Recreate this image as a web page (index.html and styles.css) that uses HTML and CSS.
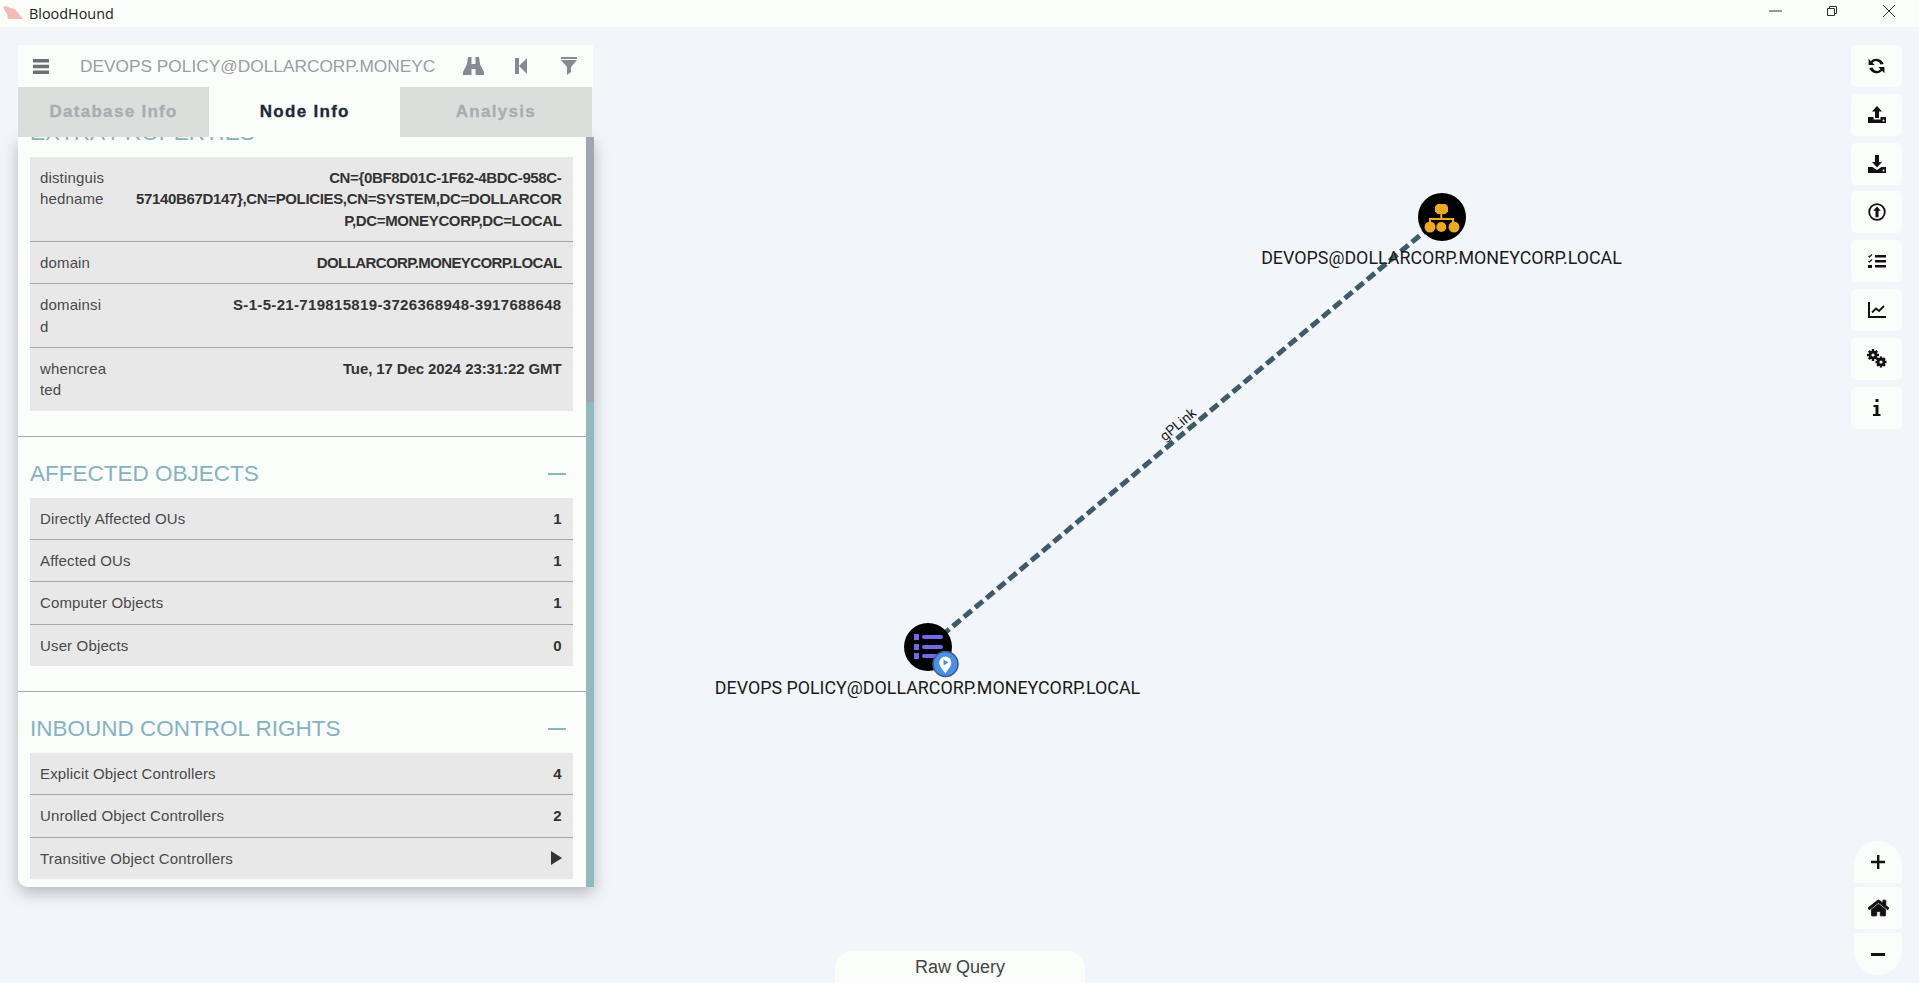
FILE: index.html
```html
<!DOCTYPE html>
<html lang="en">
<head>
  <meta charset="UTF-8">
  <title>BloodHound</title>
  <link rel="stylesheet" href="styles.css">
</head>
<body>
<!-- graph canvas sits under everything else -->
<svg class="graph" width="1919" height="983" viewBox="0 0 1919 983">
  <line class="edge" x1="1442" y1="217" x2="928" y2="647"/>
  <text class="edge-label" transform="translate(1181 428) rotate(-40)">gPLink</text>

  <circle class="node" cx="1442" cy="217" r="24"/>
  <g class="ou-icon">
    <path d="M1437.500 204h8l2.500 2.500v5l-2.500 2.500h-8l-2.500-2.500v-5z"/>
    <rect x="1440.300" y="213" width="2" height="7"/>
    <rect x="1429" y="218" width="25" height="2"/>
    <rect x="1429" y="218" width="2" height="6"/>
    <rect x="1452" y="218" width="2" height="6"/>
    <circle cx="1430" cy="227" r="5.500"/>
    <circle cx="1441.300" cy="227" r="5"/>
    <circle cx="1454" cy="227" r="5.500"/>
  </g>
  <text class="node-label" x="1441.500" y="264">DEVOPS@DOLLARCORP.MONEYCORP.LOCAL</text>

  <circle class="node" cx="928" cy="647" r="24"/>
  <g class="gpo-icon">
    <rect x="914" y="634" width="5" height="6"/>
    <rect x="914" y="644" width="5" height="6"/>
    <rect x="914" y="653" width="5" height="6"/>
    <rect x="922" y="635" width="21" height="4" rx="2"/>
    <rect x="922" y="645" width="21" height="4" rx="2"/>
    <rect x="922" y="654" width="21" height="4" rx="2"/>
  </g>
  <circle class="badge" cx="945.500" cy="664" r="12.500"/>
  <path class="pin" d="M945.300 673.500c-1.500-3-6-6.500-6-11a6 6 0 0 1 12 0c0 4.500-4.500 8-6 11z"/>
  <path class="pin-dot" d="M943.500 659.500l5 3-5 3z"/>
  <text class="node-label" x="927.500" y="694">DEVOPS POLICY@DOLLARCORP.MONEYCORP.LOCAL</text>
</svg>

<div class="titlebar">
  <svg class="app-logo" width="20" height="14" viewBox="0 0 20 14"><path d="M0 1l4-1 3 2 5 1 4 5 4 5H5L4 8 2 5z"/></svg>
  <span class="app-name">BloodHound</span>
  <div class="window-controls">
    <svg width="13" height="12" viewBox="0 0 13 12"><path d="M0 6h13"/></svg>
    <svg width="12" height="12" viewBox="0 0 12 12"><path d="M1.500 3.500h7v7h-7zM3.500 3.500v-2h7v7h-2"/></svg>
    <svg width="14" height="14" viewBox="0 0 14 14"><path d="M1 1l12 12M13 1L1 13"/></svg>
  </div>
</div>

<div class="panel">
  <div class="search-bar">
    <svg class="menu-icon" width="16" height="15" viewBox="0 0 16 15"><path d="M0 0h16v3.500H0zM0 5.700h16v3.500H0zM0 11.500h16V15H0z"/></svg>
    <div class="search-text">DEVOPS POLICY@DOLLARCORP.MONEYCORP.LOCAL</div>
    <svg class="search-icon binoculars" width="21" height="18" viewBox="0 0 21 18"><path d="M5 0h3.500v7h4V0H16l1 7 4 8v3h-8.500v-6h-4v6H0v-3l4-8z"/></svg>
    <svg class="search-icon back" width="12" height="16" viewBox="0 0 12 16"><path d="M0 0h4v16H0zM4 8l8-8v16z"/></svg>
    <svg class="search-icon funnel" width="16" height="18" viewBox="0 0 16 18"><path d="M0 0h16v2H0zM0 3h16L10 10v5l-4 3v-8z"/></svg>
  </div>

  <div class="tabs">
    <div class="tab">Database Info</div>
    <div class="tab active">Node Info</div>
    <div class="tab">Analysis</div>
  </div>

  <div class="panel-body">
    <div class="content">
      <section class="section first">
        <div class="section-head"><h4>EXTRA PROPERTIES</h4><span class="collapse"></span></div>
        <div class="row prop">
          <div class="key">distinguishedname</div>
          <div class="val val-dn">CN={0BF8D01C-1F62-4BDC-958C-57140B67D147},CN=POLICIES,CN=SYSTEM,DC=DOLLARCORP,DC=MONEYCORP,DC=LOCAL</div>
        </div>
        <div class="row prop">
          <div class="key">domain</div>
          <div class="val val-caps">DOLLARCORP.MONEYCORP.LOCAL</div>
        </div>
        <div class="row prop">
          <div class="key">domainsid</div>
          <div class="val val-sid">S-1-5-21-719815819-3726368948-3917688648</div>
        </div>
        <div class="row prop">
          <div class="key">whencreated</div>
          <div class="val">Tue, 17 Dec 2024 23:31:22 GMT</div>
        </div>
      </section>

      <section class="section">
        <div class="section-head"><h4>AFFECTED OBJECTS</h4><span class="collapse"></span></div>
        <div class="row"><div class="name">Directly Affected OUs</div><div class="val">1</div></div>
        <div class="row"><div class="name">Affected OUs</div><div class="val">1</div></div>
        <div class="row"><div class="name">Computer Objects</div><div class="val">1</div></div>
        <div class="row"><div class="name">User Objects</div><div class="val">0</div></div>
      </section>

      <section class="section">
        <div class="section-head"><h4>INBOUND CONTROL RIGHTS</h4><span class="collapse"></span></div>
        <div class="row"><div class="name">Explicit Object Controllers</div><div class="val">4</div></div>
        <div class="row"><div class="name">Unrolled Object Controllers</div><div class="val">2</div></div>
        <div class="row"><div class="name">Transitive Object Controllers</div><span class="play"></span></div>
      </section>
    </div>
    <div class="scrollbar"><div class="thumb"></div></div>
  </div>
</div>

<div class="toolbar">
  <div class="tool"><svg width="19" height="18" viewBox="0 0 18 16"><path d="M15.800 6.200A7.200 7.200 0 0 0 3.700 3.400L1.500 1.200V7h5.800L5.200 5A4.400 4.400 0 0 1 12.800 6.500zM2.200 9.800a7.200 7.200 0 0 0 12.100 2.800l2.200 2.200V9h-5.800l2.100 2A4.400 4.400 0 0 1 5.200 9.500z"/></svg></div>
  <div class="tool"><svg width="18" height="17" viewBox="0 0 18 17"><path d="M9 0l5 5.500h-3V12H7V5.500H4zM0 11h5.500v2.500h7V11H18v6H0z"/><circle class="hole" cx="15.500" cy="14.500" r="1"/></svg></div>
  <div class="tool"><svg width="18" height="18" viewBox="0 0 18 18"><path d="M7 0h4v7h3l-5 5.500L4 7h3zM0 12h4.500L9 15l4.500-3H18v6H0z"/><circle class="hole" cx="15.500" cy="15.500" r="1"/></svg></div>
  <div class="tool"><svg width="18" height="18" viewBox="0 0 18 18"><circle class="ring" cx="9" cy="9" r="7.800"/><path d="M9 3.500l3.800 4.300h-2.300v6.500h-3V7.800H5.200z"/></svg></div>
  <div class="tool"><svg width="18" height="14" viewBox="0 0 18 14"><path d="M7 1h11v2.400H7zM7 6h11v2.400H7zM7 11h11v2.400H7zM0 11h4v3H0z"/><path class="tick" d="M.5 2l1 1 2.500-2.500M.5 7l1 1 2.500-2.500"/></svg></div>
  <div class="tool"><svg width="18" height="16" viewBox="0 0 18 16"><path d="M0 0h2v14h16v2H0z"/><path class="tick wide" d="M4 10.500l4-4 3 2.500 5-5"/></svg></div>
  <div class="tool"><svg width="20" height="19" viewBox="0 0 20 19"><g class="gear"><path class="spoke" d="M6 0v12M0 6h12M1.800 1.800l8.400 8.400M10.200 1.800l-8.400 8.400"/><circle cx="6" cy="6" r="2.900"/></g><g class="gear"><path class="spoke" d="M14 7.500v11M8.500 13h11M10.100 9.100l7.800 7.800M17.900 9.100l-7.800 7.800"/><circle cx="14" cy="13" r="2.900"/></g></svg></div>
  <div class="tool"><svg width="10" height="17" viewBox="0 0 10 17"><path d="M3.500 0h3v3h-3zM1.500 6h5v9h2v2H1v-2h2.500V8h-2z"/></svg></div>
</div>

<div class="zoom-controls">
  <div class="zoom-btn zoom-in"><svg width="14" height="14" viewBox="0 0 14 14"><path d="M6 0h2.400v5.800H14v2.400H8.400V14H6V8.200H0V5.800h6z"/></svg></div>
  <div class="zoom-btn"><svg class="home" width="21" height="18" viewBox="0 0 576 512" preserveAspectRatio="none"><path d="M280.370 148.260L96 300.110V464a16 16 0 0 0 16 16l112.060-.29a16 16 0 0 0 15.920-16V368a16 16 0 0 1 16-16h64a16 16 0 0 1 16 16v95.640a16 16 0 0 0 16 16.050L464 480a16 16 0 0 0 16-16V300L295.670 148.260a12.190 12.190 0 0 0-15.300 0zM571.600 251.470L488 182.560V44.050a12 12 0 0 0-12-12h-56a12 12 0 0 0-12 12v72.610L318.470 43a48 48 0 0 0-61 0L4.340 251.470a12 12 0 0 0-1.600 16.900l25.500 31A12 12 0 0 0 45.150 301l235.220-193.740a12.190 12.190 0 0 1 15.300 0L530.900 301a12 12 0 0 0 16.900-1.600l25.500-31a12 12 0 0 0-1.700-16.930z"/></svg></div>
  <div class="zoom-btn zoom-out"><svg width="14" height="3" viewBox="0 0 14 3"><path d="M0 0h14v3H0z"/></svg></div>
</div>

<div class="raw-query">Raw Query</div>
</body>
</html>
```

FILE: styles.css
```css
html, body {
  margin: 0;
  height: 100%;
}
body {
  background: #f2f5fa;
  font-family: "Liberation Sans", Arial, sans-serif;
  color: #333;
  overflow: hidden;
  position: relative;
}

/* graph */
.graph {
  position: absolute;
  top: 0;
  left: 0;
}
.edge {
  stroke: #3f5b6b;
  stroke-width: 5;
  stroke-dasharray: 10 4.600;
}
.edge-label {
  font-family: Roboto, sans-serif;
  font-size: 14px;
  fill: #222;
  text-anchor: middle;
}
.node {
  fill: #000;
}
.node-label {
  font-family: Roboto, sans-serif;
  font-size: 17.850px;
  fill: #1b1b1b;
  text-anchor: middle;
}
.ou-icon {
  fill: #efa91f;
}
.gpo-icon {
  fill: #7568e8;
}
.badge {
  fill: #4a90e8;
  stroke: #3c5b85;
  stroke-width: 1.5;
}
.pin {
  fill: #fff;
}
.pin-dot {
  fill: #4a90e8;
}

/* title bar */
.titlebar {
  position: relative;
  display: flex;
  align-items: center;
  height: 27px;
  padding-bottom: 1px;
  box-sizing: border-box;
  background: #fbfdfb;
}
.app-logo {
  margin-left: 3px;
  fill: #f2bcb5;
}
.app-name {
  margin-left: 6px;
  font-family: "Open Sans", sans-serif;
  font-size: 14.400px;
  color: #222;
}
.window-controls {
  margin-left: auto;
  align-self: flex-start;
  display: flex;
  align-items: center;
  gap: 44px;
  padding-right: 23px;
  height: 22px;
}
.window-controls svg {
  fill: none;
  stroke: #333;
  stroke-width: 1;
}

/* left panel */
.panel {
  position: absolute;
  top: 45px;
  left: 18px;
  width: 576px;
}
.search-bar {
  display: flex;
  align-items: center;
  width: 575px;
  height: 42px;
  background: #fbfdfb;
}
.menu-icon {
  margin-left: 15px;
  fill: #6c7075;
}
.search-text {
  width: 355px;
  margin-left: 31px;
  font-size: 17.300px;
  color: #9a9ea3;
  white-space: nowrap;
  overflow: hidden;
}
.search-icon {
  fill: #868b93;
}
.binoculars {
  margin-left: 28px;
}
.back {
  margin-left: 31px;
}
.funnel {
  margin-left: 34px;
}
.tabs {
  display: flex;
  width: 573.500px;
  height: 50px;
}
.tab {
  flex: 1;
  display: flex;
  align-items: center;
  justify-content: center;
  background: #dcdedc;
  color: #a9adb1;
  font-size: 17px;
  font-weight: bold;
  letter-spacing: 1.300px;
  -webkit-text-stroke: 0.3px;
}
.tab.active {
  background: #fbfdfb;
  color: #1d2838;
}
.panel-body {
  display: flex;
  height: 750px;
  border-bottom-left-radius: 10px;
  box-shadow: 0 6px 16px rgba(0,0,0,0.25);
}
.content {
  width: 568px;
  overflow: hidden;
  background: #fbfdfb;
  border-bottom-left-radius: 10px;
}
.scrollbar {
  width: 8px;
  background: #91b9bd;
}
.thumb {
  height: 265px;
  background: #a1a6ac;
}

/* sections */
.section {
  padding: 0 13px 25px 12px;
  border-bottom: 1px solid #a2a8a8;
}
.section:last-child {
  border-bottom: none;
  padding-bottom: 0;
}
.section.first {
  margin-top: -41px;
}
.section-head {
  display: flex;
  align-items: center;
  justify-content: space-between;
  height: 61px;
  padding-top: 13px;
  box-sizing: border-box;
}
.section-head h4 {
  margin: 0;
  font-size: 22.500px;
  font-weight: normal;
  color: #85b2c3;
}
.collapse {
  width: 18px;
  height: 2px;
  margin-right: 7px;
  background: #8ab6bf;
}
.row {
  display: flex;
  justify-content: space-between;
  padding: 10px 11.500px 10px 10px;
  font-size: 15px;
  line-height: 21.330px;
  background: #e8e8e8;
  border-bottom: 1px solid #a2a8a8;
}
.row:last-child {
  border-bottom: none;
}
.name, .key {
  color: #4a4a4a;
  letter-spacing: 0.15px;
}
.val {
  font-weight: bold;
  color: #333;
  text-align: right;
}
.key {
  flex: none;
  width: 68px;
  overflow-wrap: anywhere;
}
.prop .val {
  width: 427px;
  overflow-wrap: anywhere;
  letter-spacing: -0.1px;
}
.prop .val-dn {
  letter-spacing: -0.35px;
}
.prop .val-caps {
  letter-spacing: -0.6px;
}
.prop .val-sid {
  letter-spacing: 0.33px;
}
.play {
  align-self: center;
  border-left: 11px solid #333;
  border-top: 7px solid transparent;
  border-bottom: 7px solid transparent;
}

/* right side buttons */
.toolbar {
  position: absolute;
  top: 45px;
  left: 1851px;
  display: flex;
  flex-direction: column;
  gap: 6.800px;
}
.tool {
  width: 51px;
  height: 42px;
  display: flex;
  align-items: center;
  justify-content: center;
  background: #fbfdfb;
  border-radius: 5px;
}
.tool svg, .zoom-btn svg {
  fill: #111;
}
.tool .hole {
  fill: #fbfdfb;
}
.tool .ring {
  fill: none;
  stroke: #111;
  stroke-width: 1.800;
}
.tool .tick {
  fill: none;
  stroke: #111;
  stroke-width: 1.200;
}
.tool .tick.wide {
  stroke-width: 1.800;
}
.gear .spoke {
  fill: none;
  stroke: #111;
  stroke-width: 2.400;
}
.gear circle {
  fill: #fbfdfb;
  stroke: #111;
  stroke-width: 2.600;
}
.zoom-controls {
  position: absolute;
  top: 841px;
  left: 1854px;
  display: flex;
  flex-direction: column;
  gap: 4px;
}
.zoom-btn {
  width: 48px;
  height: 42px;
  display: flex;
  align-items: center;
  justify-content: center;
  background: #fbfdfb;
  border-radius: 4px;
}
.home {
  stroke: #111;
  stroke-width: 24;
}
.zoom-in {
  border-radius: 24px 24px 4px 4px;
}
.zoom-out {
  border-radius: 4px 4px 24px 24px;
}
.raw-query {
  position: absolute;
  left: 835px;
  bottom: 0;
  width: 250px;
  height: 32px;
  text-align: center;
  line-height: 32px;
  font-size: 18px;
  color: #444;
  background: #fbfdfb;
  border-radius: 18px 18px 0 0;
}
```
